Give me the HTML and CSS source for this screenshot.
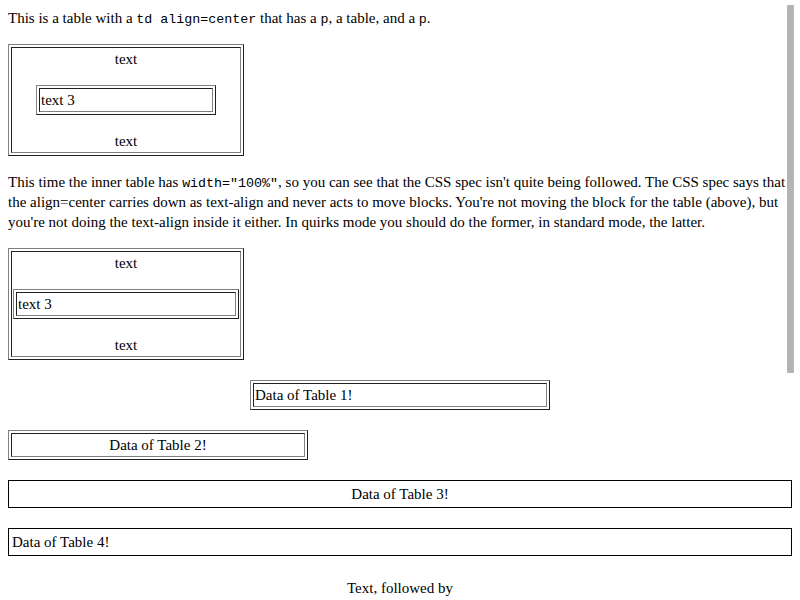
FILE: index.html
```html
<!DOCTYPE html>
<html>
<head>
<meta charset="utf-8">
<title>td align=center test</title>
<link rel="stylesheet" href="styles.css">
</head>
<body>
<p class="first">This is a table with a <code>td align=center</code> that has a <code>p</code>, a table, and a <code>p</code>.</p>

<table class="bt outer">
  <tr><td class="center">
    <p class="cellp">text</p>
    <table class="bt inner80"><tr><td class="left">text 3</td></tr></table>
    <p class="cellp last">text</p>
  </td></tr>
</table>

<p>This time the inner table has <code>width="100%"</code>, so you can see that the CSS spec isn't quite being followed. The CSS spec says that the align=center carries down as text-align and never acts to move blocks. You're not moving the block for the table (above), but you're not doing the text-align inside it either. In quirks mode you should do the former, in standard mode, the latter.</p>

<table class="bt outer">
  <tr><td class="center">
    <p class="cellp">text</p>
    <table class="bt inner100"><tr><td class="left">text 3</td></tr></table>
    <p class="cellp last">text</p>
  </td></tr>
</table>

<table class="bt w300 gap centered"><tr><td class="left">Data of Table 1!</td></tr></table>

<table class="bt w300 gap"><tr><td class="center">Data of Table 2!</td></tr></table>

<table class="st full gap"><tr><td class="center">Data of Table 3!</td></tr></table>

<table class="st full gap"><tr><td class="left">Data of Table 4!</td></tr></table>

<p class="textc">Text, followed by</p>

<table class="bt w300 centered"><tr><td class="left">a centered table.</td></tr></table>

<p class="textc">More text, followed by</p>

<table class="bt w300 centered"><tr><td class="center">another centered table.</td></tr></table>

<p>End of test.</p>
<div class="spacer"></div>
<div class="scrollthumb"></div>
</body>
</html>
```
FILE: styles.css
```css
html {
  background: #fff;
}
body {
  margin: 8px;
  font-family: "Liberation Serif", "Times New Roman", serif;
  font-size: 15px;
  line-height: 20px;
  color: #000;
}
p {
  margin: 16px 0;
}
p.first {
  margin-top: 0;
}
code {
  font-family: "Liberation Mono", "Courier New", monospace;
  font-size: 13.33px;
  line-height: 1;
}
table {
  border-collapse: separate;
  border-spacing: 2px;
}
td {
  padding: 1px;
  vertical-align: middle;
}
.bt {
  border: 1px solid;
  border-color: #808080 #202020 #202020 #808080;
}
.bt > tbody > tr > td,
.bt > tr > td {
  border: 1px solid;
  border-color: #202020 #808080 #808080 #202020;
}
.st {
  border: 1px solid #000;
}
.outer {
  width: 236px;
}
.inner80 {
  width: 180px;
  margin: 0 auto;
}
.inner100 {
  width: 100%;
}
.w300 {
  width: 300px;
}
.full {
  width: 100%;
}
.centered {
  margin-left: auto;
  margin-right: auto;
}
.gap {
  margin-top: 20px;
}
.center {
  text-align: center;
}
.left {
  text-align: left;
}
.cellp {
  margin: 0 0 16px;
}
.cellp.last {
  margin: 16px 0 0;
}
.textc {
  text-align: center;
  margin-top: 22px;
}
.spacer {
  height: 184px;
}
.scrollthumb {
  position: fixed;
  top: 5px;
  right: 6px;
  width: 7px;
  height: 368px;
  background: #b4b4b4;
  border-radius: 1px;
}
```
